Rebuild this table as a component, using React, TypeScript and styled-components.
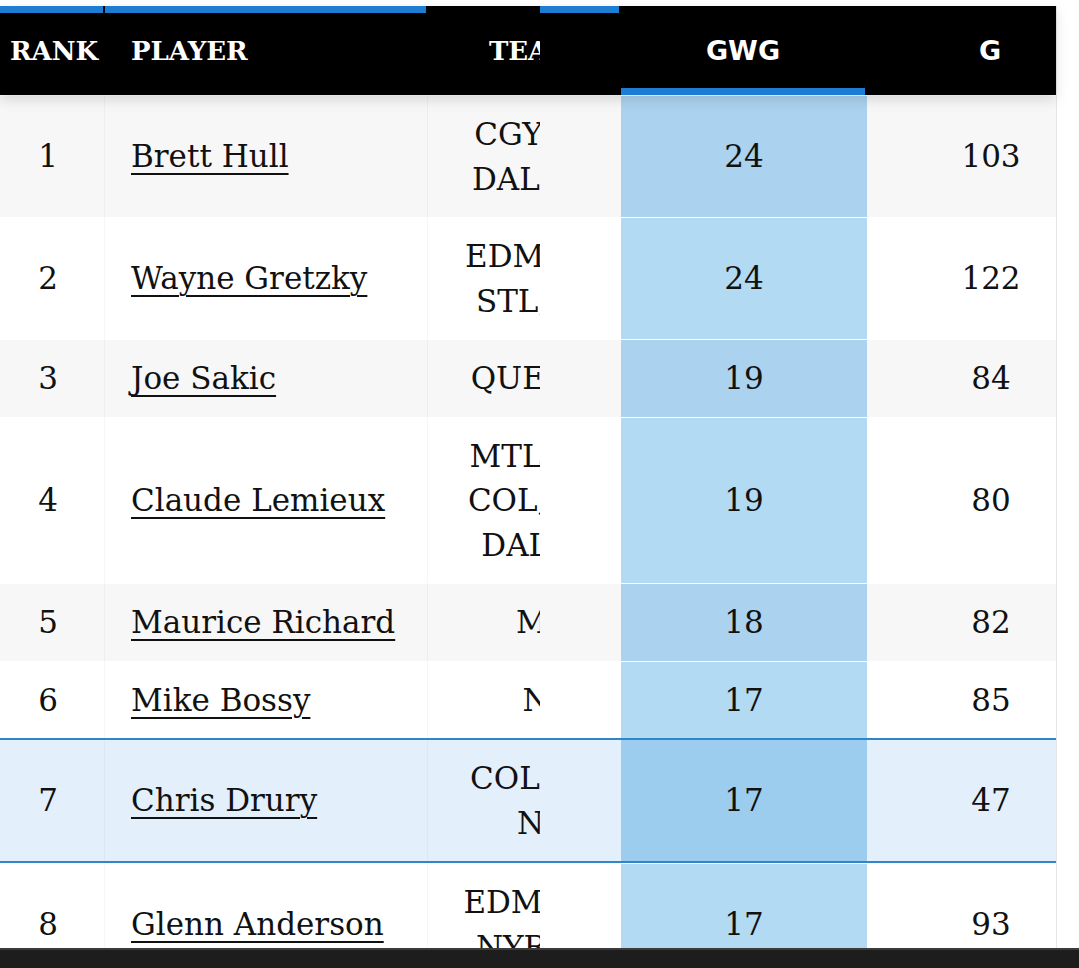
import { createGlobalStyle, styled } from "styled-components";

type Shade = "light" | "plain" | "picked";

interface IPlayer {
  rank: number;
  name: string;
  teams: string[];
  gwg: number;
  goals: number;
  shade: Shade;
}

const players: IPlayer[] = [
  { rank: 1, name: "Brett Hull", teams: ["CGY, STL,", "DAL, DET,"], gwg: 24, goals: 103, shade: "light" },
  { rank: 2, name: "Wayne Gretzky", teams: ["EDM, LAK,", "STL, NYR"], gwg: 24, goals: 122, shade: "plain" },
  { rank: 3, name: "Joe Sakic", teams: ["QUE, COL"], gwg: 19, goals: 84, shade: "light" },
  { rank: 4, name: "Claude Lemieux", teams: ["MTL, NJD,", "COL, PHX,", "DAL, SJS"], gwg: 19, goals: 80, shade: "plain" },
  { rank: 5, name: "Maurice Richard", teams: ["MTL"], gwg: 18, goals: 82, shade: "light" },
  { rank: 6, name: "Mike Bossy", teams: ["NYI"], gwg: 17, goals: 85, shade: "plain" },
  { rank: 7, name: "Chris Drury", teams: ["COL, BUF,", "NYR"], gwg: 17, goals: 47, shade: "picked" },
  { rank: 8, name: "Glenn Anderson", teams: ["EDM, TOR,", "NYR, STL"], gwg: 17, goals: 93, shade: "plain" },
];

const BLUE = "#1c7dd2";

const rowColors: Record<Shade, string> = {
  light: "#f7f7f7",
  plain: "#ffffff",
  picked: "#e3f0fb",
};

const sortedColors: Record<Shade, string> = {
  light: "#abd2ee",
  plain: "#b3daf3",
  picked: "#9ccdef",
};

const GlobalStyle = createGlobalStyle`
  html, body {
    margin: 0;
    padding: 0;
    background: #fff;
  }
  body {
    font-family: "DejaVu Serif", serif;
    color: #111;
  }
`;

const Page = styled.div`
  height: 100vh;
  display: flex;
  flex-direction: column;
  overflow: hidden;
`;

const Viewport = styled.div`
  flex: 1;
  overflow: hidden;
  padding-top: 6px;
`;

const Table = styled.div`
  width: 1056px;
  border-right: 1px solid #e6e6e6;
`;

const HeaderRow = styled.div`
  display: flex;
  height: 89px;
  background: #000;
  color: #fff;
  position: relative;
  z-index: 1;
  box-shadow: 0 5px 12px rgba(0, 0, 0, 0.13);
`;

const Frozen = styled.div`
  flex: 0 0 540px;
  display: flex;
  overflow: hidden;
`;

const Scrolled = styled.div`
  flex: 0 0 515px;
  display: flex;
  overflow: hidden;
`;

const HeadCell = styled.div<{ $w: number; $align: "left" | "center"; $bar?: "top" | "bottom"; $sans?: boolean }>`
  flex: 0 0 ${(p) => p.$w}px;
  box-sizing: border-box;
  display: flex;
  align-items: center;
  justify-content: ${(p) => (p.$align === "left" ? "flex-start" : "center")};
  padding: ${(p) => (p.$align === "left" ? "0 0 0 26px" : "0")};
  border-right: 2px solid #000;
  font-family: ${(p) => (p.$sans ? '"DejaVu Sans", sans-serif' : '"DejaVu Serif", serif')};
  font-weight: 700;
  font-size: ${(p) => (p.$sans ? 27 : 26)}px;
  white-space: nowrap;
  box-shadow: ${(p) =>
    p.$bar === "top" ? `inset 0 7px 0 ${BLUE}` : p.$bar === "bottom" ? `inset 0 -7px 0 ${BLUE}` : "none"};
`;

const RankHead = styled(HeadCell)`
  padding: 0 0 0 10px;
  justify-content: flex-start;
`;

const TeamHead = styled(HeadCell)`
  padding-right: 32px;
`;

const Row = styled.div<{ $shade: Shade }>`
  display: flex;
  background: ${(p) => rowColors[p.$shade]};
  border-top: ${(p) => (p.$shade === "picked" ? `2px solid #2f87c9` : "1px solid #fff")};
  border-bottom: ${(p) => (p.$shade === "picked" ? `2px solid #2f87c9` : "none")};
`;

const Cell = styled.div<{ $w: number }>`
  flex: 0 0 ${(p) => p.$w}px;
  box-sizing: border-box;
  display: flex;
  align-items: center;
  padding: 16px 0;
  font-size: 31px;
  line-height: 44.5px;
  white-space: nowrap;
  border-right: 1px solid rgba(0, 0, 0, 0.035);
`;

const RankCell = styled(Cell)`
  justify-content: center;
  padding-right: 8px;
`;

const PlayerCell = styled(Cell)`
  padding-left: 26px;
`;

const PlayerLink = styled.a`
  color: #111;
  text-decoration: underline;
  text-decoration-thickness: 2px;
  text-underline-offset: 6px;
  cursor: pointer;
`;

const TeamCell = styled(Cell)`
  flex-direction: column;
  justify-content: center;
  align-items: center;
  text-align: center;
  padding-left: 6px;
`;

const TeamLine = styled.span`
  display: block;
`;

const StatCell = styled(Cell)<{ $sorted?: Shade }>`
  justify-content: center;
  border-right: none;
  background: ${(p) => (p.$sorted ? sortedColors[p.$sorted] : "transparent")};
`;

const NavBar = styled.div`
  flex: 0 0 18px;
  background: #1d1d1d;
  border-top: 2px solid #3b3b3b;
`;

export default function App() {
  return (
    <Page>
      <GlobalStyle />
      <Viewport>
        <Table>
          <HeaderRow>
            <Frozen>
              <RankHead $w={105} $align="left" $bar="top">RANK</RankHead>
              <HeadCell $w={323} $align="left" $bar="top">PLAYER</HeadCell>
              <TeamHead $w={244} $align="center">TEAM</TeamHead>
            </Frozen>
            <Scrolled>
              <HeadCell $w={81} $align="center" $bar="top" />
              <HeadCell $w={246} $align="center" $bar="bottom" $sans>GWG</HeadCell>
              <HeadCell $w={248} $align="center" $sans>G</HeadCell>
            </Scrolled>
          </HeaderRow>
          {players.map((p) => (
            <Row key={p.rank} $shade={p.shade}>
              <Frozen>
                <RankCell $w={105}>{p.rank}</RankCell>
                <PlayerCell $w={323}>
                  <PlayerLink>{p.name}</PlayerLink>
                </PlayerCell>
                <TeamCell $w={244}>
                  {p.teams.map((t) => (
                    <TeamLine key={t}>{t}</TeamLine>
                  ))}
                </TeamCell>
              </Frozen>
              <Scrolled>
                <StatCell $w={81} />
                <StatCell $w={246} $sorted={p.shade}>{p.gwg}</StatCell>
                <StatCell $w={248}>{p.goals}</StatCell>
              </Scrolled>
            </Row>
          ))}
        </Table>
      </Viewport>
      <NavBar />
    </Page>
  );
}
